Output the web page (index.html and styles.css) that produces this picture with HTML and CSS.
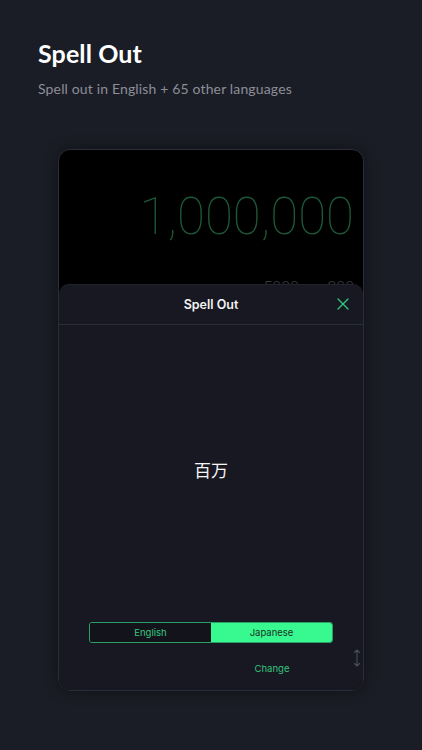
FILE: index.html
```html
<!DOCTYPE html>
<html>
<head>
<meta charset="utf-8">
<link rel="stylesheet" href="styles.css">
</head>
<body>
<div class="page">
  <header class="intro">
    <h1 class="title">Spell Out</h1>
    <p class="subtitle">Spell out in English + 65 other languages</p>
  </header>
  <div class="device">
    <div class="display">
      <div class="big-number">1,000,000</div>
      <div class="expr"><span>5000</span><span class="op">×</span><span>200</span></div>
    </div>
    <div class="sheet">
      <div class="sheet-header">
        <span class="sheet-title">Spell Out</span>
        <svg class="close" width="12" height="12" viewBox="0 0 12 12"><path d="M1 1 L11 11 M11 1 L1 11" stroke="#35c97e" stroke-width="1.3" fill="none" stroke-linecap="round"/></svg>
      </div>
      <div class="sheet-body">
        <div class="result">百万</div>
        <div class="segmented">
          <div class="seg seg-off">English</div>
          <div class="seg seg-on">Japanese</div>
        </div>
        <div class="change-row">
          <span class="change">Change</span>
        </div>
      </div>
      <svg class="resize" width="8" height="20" viewBox="0 0 8 20"><path d="M4 2 V18 M1.5 4.5 L4 2 L6.5 4.5 M1.5 15.5 L4 18 L6.5 15.5" stroke="#4a4d57" stroke-width="1.1" fill="none" stroke-linecap="round" stroke-linejoin="round"/></svg>
    </div>
  </div>
</div>
</body>
</html>
```
FILE: styles.css
```css
* { box-sizing: border-box; }
html, body {
  margin: 0;
  padding: 0;
  background: #1b1d26;
}
.page {
  width: 422px;
  height: 750px;
  overflow: hidden;
  background: #1b1d26;
  padding-top: 38px;
}
.intro {
  padding-left: 38px;
}
.title {
  margin: 0;
  font-family: "Lato", "Noto Sans", sans-serif;
  font-weight: 700;
  font-size: 25px;
  line-height: 30px;
  color: #ffffff;
  letter-spacing: 0.1px;
}
.subtitle {
  margin: 12px 0 0 0;
  font-family: "Lato", "Noto Sans", sans-serif;
  font-size: 14px;
  line-height: 18px;
  color: #8b8e98;
  letter-spacing: 0.15px;
}
.device {
  position: relative;
  margin: 51px 0 0 58px;
  width: 306px;
  height: 542px;
  background: #000000;
  border: 1px solid #2b2d38;
  border-radius: 12px;
  overflow: hidden;
  box-shadow: 0 0 14px rgba(0, 0, 0, 0.45);
  display: flex;
  flex-direction: column;
}
.display {
  height: 134px;
  overflow: hidden;
  display: flex;
  flex-direction: column;
  align-items: flex-end;
  padding: 41px 9px 0 0;
  flex-shrink: 0;
}
.big-number {
  font-family: "Roboto", sans-serif;
  font-weight: 100;
  font-size: 51px;
  line-height: 51px;
  color: #1d5939;
  letter-spacing: 0;
}
.expr {
  margin-top: 36px;
  display: flex;
  gap: 10px;
  font-family: "Roboto", sans-serif;
  font-weight: 300;
  font-size: 16px;
  line-height: 20px;
  color: #3a3c45;
}
.sheet {
  position: relative;
  flex: 1;
  background: #171821;
  border-radius: 10px 10px 0 0;
  border-top: 1px solid #22242d;
  display: flex;
  flex-direction: column;
}
.sheet-header {
  position: relative;
  height: 40px;
  border-bottom: 1px solid #2a2c36;
  display: flex;
  align-items: center;
  justify-content: center;
  flex-shrink: 0;
}
.sheet-title {
  font-family: "Inter", "Roboto", sans-serif;
  font-weight: 600;
  font-size: 12.5px;
  color: #f2f3f5;
}
.close {
  position: absolute;
  right: 14px;
  top: 13px;
}
.sheet-body {
  flex: 1;
  display: flex;
  flex-direction: column;
  align-items: center;
}
.result {
  height: 297px;
  display: flex;
  align-items: center;
  justify-content: center;
  font-family: "Noto Sans CJK JP", "Noto Sans CJK SC", sans-serif;
  font-size: 17px;
  color: #f4f4f6;
  padding-bottom: 8px;
}
.segmented {
  width: 244px;
  height: 21px;
  display: flex;
  border: 1px solid #2e9e67;
  border-radius: 3px;
  overflow: hidden;
}
.seg {
  flex: 1;
  display: flex;
  align-items: center;
  justify-content: center;
  font-family: "Inter", "Roboto", sans-serif;
  font-size: 9.5px;
}
.seg-off {
  color: #37c880;
  background: #13141b;
}
.seg-on {
  background: #38f98f;
  color: #1b3326;
}
.change-row {
  width: 244px;
  display: flex;
  margin-top: 20px;
}
.change {
  margin-left: 122px;
  flex: 1;
  text-align: center;
  font-family: "Inter", "Roboto", sans-serif;
  font-size: 9.5px;
  color: #35c27b;
}
.resize {
  position: absolute;
  right: 2px;
  bottom: 22px;
}
```
